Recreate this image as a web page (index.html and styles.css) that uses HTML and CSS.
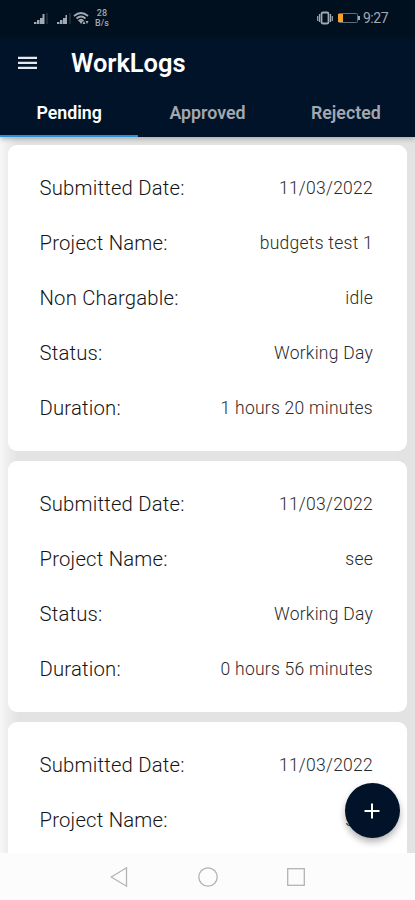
FILE: index.html
```html
<!DOCTYPE html>
<html lang="en">
<head>
<meta charset="utf-8">
<title>WorkLogs</title>
<link rel="stylesheet" href="styles.css">
</head>
<body>
<div class="screen">
  <header class="header">
    <div class="status">
      <svg class="signals" width="58" height="16" viewBox="0 0 58 16" fill="#a3a9b1">
        <path d="M1 14v-2h2.500v2zM4 14v-4h2.500v4zM7 14V8h2.500v6zM9.500 14V4h2v10z"/>
        <path d="M13.500 3h1v11h-1zM36.500 3h1v11h-1z" opacity=".35"/>
        <path d="M24 14v-2h2.500v2zM27 14v-4h2.500v4zM30 14V8h2.500v6zM32.500 14V5h1.500v9z"/>
        <g fill="none" stroke="#a3a9b1" stroke-width="1.700"><path d="M41 6q7-6 14 0M43.500 8.500q4.500-4 9 0M45.500 11q2.500-2.500 5 0"/></g>
        <path d="M46 11h4l-2 3zM49.500 14l1.500-3 1.500 3zM52.500 11h3l-1.500 3z"/>
      </svg>
      <div class="speed"><span>28</span><span>B/s</span></div>
      <div class="status-right">
        <svg width="44" height="14" viewBox="0 0 44 14" fill="none" stroke="#a3a9b1">
          <rect x="4.500" y="1.500" width="7" height="11" rx="1.500" stroke-width="1.800"/>
          <path d="M2.500 3v8M13.500 3v8M.7 5v5M15.300 5v5" stroke-width="1.200"/>
          <rect x="21.500" y="2.500" width="19" height="9" rx="1" stroke="#646d7a"/>
          <path d="M42 5v4" stroke-width="2"/>
          <path d="M21 3h5v8h-5z" fill="#f6a02d" stroke="none"/>
        </svg>
        <span class="clock">9:27</span>
      </div>
    </div>
    <div class="appbar">
      <svg class="menu" width="19" height="14" viewBox="0 0 19 14" fill="#e6e8eb"><path d="M0 .8h19v2.300H0zM0 5.800h19v2.300H0zM0 10.800h19v2.300H0z"/></svg>
      <h1 class="title">WorkLogs</h1>
    </div>
    <nav class="tabs">
      <div class="tab active">Pending</div>
      <div class="tab">Approved</div>
      <div class="tab">Rejected</div>
    </nav>
  </header>
  <main class="list">
    <section class="card">
      <div class="row"><span class="label">Submitted Date:</span><span class="value">11/03/2022</span></div>
      <div class="row"><span class="label">Project Name:</span><span class="value">budgets test 1</span></div>
      <div class="row"><span class="label">Non Chargable:</span><span class="value">idle</span></div>
      <div class="row"><span class="label">Status:</span><span class="value">Working Day</span></div>
      <div class="row"><span class="label">Duration:</span><span class="value">1 hours 20 minutes</span></div>
    </section>
    <section class="card">
      <div class="row"><span class="label">Submitted Date:</span><span class="value">11/03/2022</span></div>
      <div class="row"><span class="label">Project Name:</span><span class="value">see</span></div>
      <div class="row"><span class="label">Status:</span><span class="value">Working Day</span></div>
      <div class="row"><span class="label">Duration:</span><span class="value">0 hours 56 minutes</span></div>
    </section>
    <section class="card">
      <div class="row"><span class="label">Submitted Date:</span><span class="value">11/03/2022</span></div>
      <div class="row"><span class="label">Project Name:</span><span class="value">see</span></div>
    </section>
  </main>
  <button class="fab" aria-label="Add"><svg width="16" height="16" viewBox="0 0 16 16" stroke="#fff" stroke-width="2"><path d="M8 .5v15M.5 8h15"/></svg></button>
  <footer class="navbar">
    <svg width="20" height="22" viewBox="0 0 20 22"><path d="M16.500 1.800v18.400L1.300 11z"/></svg>
    <svg width="20" height="22" viewBox="0 0 20 22"><circle cx="10" cy="11" r="9.200"/></svg>
    <svg width="20" height="22" viewBox="0 0 20 22"><rect x="1.700" y="2.700" width="16.600" height="16.600"/></svg>
  </footer>
</div>
</body>
</html>
```

FILE: styles.css
```css
* { box-sizing: border-box; }
body { margin: 0; font-family: Roboto, "Liberation Sans", sans-serif; }
.screen {
  position: relative;
  display: flex;
  flex-direction: column;
  width: 415px;
  height: 900px;
  overflow: hidden;
  background: #e3e3e3;
}
.header {
  position: relative;
  height: 137px;
  flex: none;
  background: linear-gradient(#00101f 0, #00101f 34px, #001329 40px);
  box-shadow: 0 2px 5px rgba(0, 0, 0, .25);
}
.status {
  display: flex;
  align-items: center;
  height: 36px;
  padding: 0 27px 0 33px;
  color: #a3a9b1;
}
.speed {
  display: flex;
  flex-direction: column;
  align-items: center;
  margin-left: 4px;
  font-size: 9px;
  font-weight: 500;
  line-height: 10px;
}
.status-right { display: flex; align-items: center; gap: 2px; margin-left: auto; }
.clock { font-size: 14px; line-height: 16px; letter-spacing: -.5px; }
.appbar { display: flex; align-items: center; height: 53px; padding-left: 18px; }
.title { margin: 0 0 0 34px; color: #fff; font-size: 25.500px; font-weight: 600; line-height: 32px; letter-spacing: -.05px; }
.tabs { display: flex; height: 48px; }
.tab {
  flex: 1;
  padding-top: 13px;
  border-bottom: 2.500px solid transparent;
  color: #a3a8b0;
  font-size: 17.800px;
  font-weight: 600;
  line-height: 22px;
  text-align: center;
}
.tab.active { color: #fff; border-bottom-color: #2b8fd8; }
.list {
  display: flex;
  flex: 1;
  flex-direction: column;
  gap: 9.500px;
  min-height: 0;
  padding: 7.700px 8px 0;
  overflow: hidden;
  background: linear-gradient(90deg, #f7f7f7 0, #ededed 8px, #e3e3e3 18px, #e3e3e3 100%);
}
.card {
  flex: none;
  padding: 16px 34px 16px 31.500px;
  border-radius: 9px;
  background: #fff;
}
.row { display: flex; align-items: center; justify-content: space-between; height: 54.900px; }
.label { color: #151515; font-size: 20.300px; font-weight: 350; letter-spacing: .2px; }
.value { color: #2a2a2a; font-size: 17.500px; font-weight: 350; letter-spacing: .25px; }
.fab {
  position: absolute;
  top: 783px;
  left: 344.500px;
  display: flex;
  align-items: center;
  justify-content: center;
  width: 55px;
  height: 55px;
  padding: 0;
  border: 0;
  border-radius: 50%;
  background: #001329;
  box-shadow: 0 4px 7px rgba(0, 0, 0, .3);
}
.navbar {
  display: flex;
  flex: none;
  justify-content: center;
  gap: 68px;
  height: 47px;
  padding-top: 13px;
  background: #fcfcfc;
}
.navbar svg { fill: none; stroke: #b4b4b4; stroke-width: 1.300; }
```
